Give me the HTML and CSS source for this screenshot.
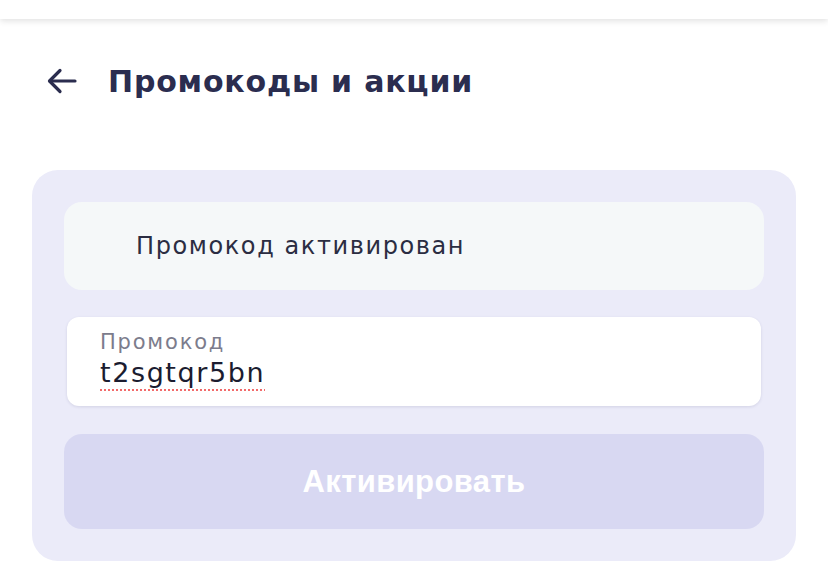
FILE: index.html
```html
<!DOCTYPE html>
<html>
<head>
    <title>Промокоды и акции</title>
    <link rel="stylesheet" href="styles.css">
</head>
<body>
    <div class="top-bar"></div>

    <div class="header">
        <button class="back" type="button" aria-label="Назад">
            <svg width="30" height="26" viewBox="0 0 30 26" fill="none" stroke="#2b2d4f" stroke-width="3.2" stroke-linecap="round" stroke-linejoin="round">
                <path d="M28 13H3"/>
                <path d="M13 2.5L2.5 13L13 23.5"/>
            </svg>
        </button>
        <h1>Промокоды и акции</h1>
    </div>

    <div class="card">
        <div class="notice">Промокод активирован</div>

        <div class="field">
            <div class="field-label">Промокод</div>
            <div class="field-value"><span class="misspelled">t2sgtqr5bn</span></div>
        </div>

        <button class="activate" type="button" disabled>Активировать</button>
    </div>
</body>
</html>
```

FILE: styles.css
```css
body { margin: 0; background: #fff; font-family: "DejaVu Sans", "Noto Sans", sans-serif; color: #2b2d4f; }
.top-bar { height: 19px; background: #fff; box-shadow: 0 2px 6px rgba(0, 0, 0, 0.12); }
.header { display: flex; align-items: center; padding: 42px 0 0 47px; height: 40px; }
.back { border: 0; background: none; padding: 0; width: 30px; height: 26px; margin-right: 31px; display: flex; }
h1 { margin: 0; font-size: 30px; font-weight: 700; color: #2b2d4f; letter-spacing: 0.8px; }
.card { margin: 69px 32px 0 32px; width: 700px; background: #ebebf9; border-radius: 26px; padding: 32px; display: flex; flex-direction: column; }
.notice { height: 88px; background: #f5f8f9; border-radius: 18px; display: flex; align-items: center; padding-left: 72px; font-size: 24px; letter-spacing: 1.6px; color: #2b2d42; }
.field { margin: 27px 3px 0 3px; height: 89px; background: #fff; border-radius: 12px; box-shadow: 0 1px 3px rgba(40, 40, 90, 0.12); padding: 12px 33px 0 33px; box-sizing: border-box; }
.field-label { font-size: 21px; color: #7c7c8c; line-height: 27px; letter-spacing: 1.8px; }
.field-value { font-size: 27px; color: #1b1c30; line-height: 34px; letter-spacing: 1.6px; }
.misspelled { text-decoration: underline dotted #f26b6b; text-decoration-thickness: 2px; text-underline-offset: 7px; }
.activate { margin-top: 28px; height: 95px; border: 0; border-radius: 18px; background: #d8d8f2; color: #fff; font-family: "Liberation Sans", Arial, sans-serif; font-weight: 700; font-size: 31px; letter-spacing: 0.4px; }
```
